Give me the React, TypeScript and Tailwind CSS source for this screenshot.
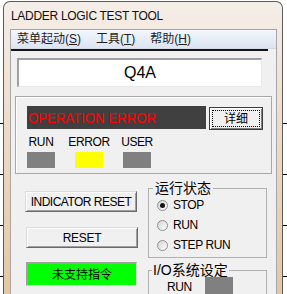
import React from 'react';

function Ticks({ right }: { right?: boolean }) {
  return (
    <div className={right ? 'flex w-[4px] shrink-0 flex-col gap-[50px] pt-[123px]' : 'flex w-[3px] shrink-0 flex-col gap-[50px] pt-[123px]'}>
      <div className="h-px bg-black" />
      <div className="h-px bg-black" />
      <div className="h-px bg-black" />
      <div className="h-px bg-black" />
    </div>
  );
}

function Radio({ label, checked }: { label: string; checked?: boolean }) {
  return (
    <div className="flex h-[20px] items-center gap-[5px] pl-[8px]">
      <div className="flex h-[11px] w-[11px] items-center justify-center rounded-full border border-[#8e8f8f] bg-gradient-to-br from-[#d4d4d4] to-white">
        {checked && <div className="h-[5px] w-[5px] rounded-full bg-[#151515]" />}
      </div>
      <span className="text-[12px] leading-none tracking-[-0.4px]">{label}</span>
    </div>
  );
}

function Indicator({ label, color }: { label: string; color: string }) {
  return (
    <div className="flex w-[28px] flex-col items-center">
      <span className="whitespace-nowrap text-[12px] leading-[14px] tracking-[-0.4px]">{label}</span>
      <div className={`mt-[3px] h-[16px] w-[28px] ${color}`} />
    </div>
  );
}

export default function App() {
  return (
    <div className="flex h-[294px] w-[287px] overflow-hidden bg-white font-['Liberation_Sans','Noto_Sans_CJK_SC',sans-serif] text-black">
      <Ticks />

      {/* Window */}
      <div className="mt-px flex w-[280px] shrink-0 flex-col rounded-t-[7px] border border-b-0 border-[#5b5b5b] bg-gradient-to-b from-[#f5eee8] via-[#ecd8c4] to-[#e5c6a4]">
        <div className="flex h-[27px] shrink-0 items-center pl-[7px] text-[12px] tracking-[-0.3px] text-[#111]">
          LADDER LOGIC TEST TOOL
        </div>

        <div className="ml-[6px] mr-[5px] shrink-0 border border-b-0 border-[#a6a6a6] bg-[#f0f0f0] pb-[20px]">
          {/* Menu */}
          <div className="flex h-[19px] items-center gap-[15px] border-b border-[#d2d9e6] bg-gradient-to-b from-[#f3f6fc] to-[#dce4f2] pl-[6px] text-[12px] leading-none text-[#1e1e1e]">
            <span>菜单起动(<span className="underline">S</span>)</span>
            <span>工具(<span className="underline">T</span>)</span>
            <span>帮助(<span className="underline">H</span>)</span>
          </div>
          <div className="h-[2px] w-[257px] bg-[#141414]" />

          {/* Device name */}
          <div className="ml-[6px] mt-[7px] flex h-[29px] w-[245px] items-center justify-center border-l-2 border-t-2 border-b border-r border-l-[#a0a0a0] border-t-[#a0a0a0] border-b-[#e8e8e8] border-r-[#e8e8e8] bg-white text-[16px] font-['Liberation_Sans',sans-serif]">
            Q4A
          </div>

          {/* Status panel */}
          <div className="ml-[4px] mt-[9px] h-[78px] w-[257px] border border-[#a8a8a8] pl-[11px] pt-[9px] shadow-[inset_1px_1px_0_#fff]">
            <div className="flex items-start gap-[3px]">
              <div className="flex h-[23px] w-[179px] items-center overflow-hidden bg-[#404040]">
                <span className="origin-left scale-x-[0.88] whitespace-nowrap pl-[1px] text-[15px] leading-none text-[#ff0000]">
                  OPERATION ERROR
                </span>
              </div>
              <button className="mt-px flex h-[23px] w-[54px] items-center justify-center border border-[#3c3c3c] bg-[#f0f0f0] p-[2px] shadow-[inset_1px_1px_0_#fff,inset_-1px_-1px_0_#808080]">
                <span className="flex h-full w-full items-center justify-center border border-dotted border-black text-[12px] leading-none">
                  详细
                </span>
              </button>
            </div>
            <div className="mt-[5px] flex gap-[20px]">
              <Indicator label="RUN" color="bg-[#808080]" />
              <Indicator label="ERROR" color="bg-[#ffff00]" />
              <Indicator label="USER" color="bg-[#808080]" />
            </div>
          </div>

          {/* Lower section */}
          <div className="mt-[7px] flex">
            <div className="ml-[14px] flex w-[113px] flex-col pt-[10px]">
              <button className="h-[21px] w-[112px] border border-[#dcdcdc] border-b-[#696969] border-r-[#696969] bg-[#f0f0f0] text-[12px] leading-none tracking-[-0.5px] shadow-[inset_1px_1px_0_#fff,inset_-1px_-1px_0_#a0a0a0]">
                INDICATOR RESET
              </button>
              <button className="ml-px mt-[15px] h-[21px] w-[112px] border border-[#dcdcdc] border-b-[#696969] border-r-[#696969] bg-[#f0f0f0] text-[12px] leading-none tracking-[-0.3px] shadow-[inset_1px_1px_0_#fff,inset_-1px_-1px_0_#a0a0a0]">
                RESET
              </button>
              <div className="ml-px mt-[14px] flex h-[24px] w-[111px] items-center justify-center border-l-2 border-t-2 border-b border-r border-l-[#a0a0a0] border-t-[#a0a0a0] border-b-[#e8e8e8] border-r-[#e8e8e8] bg-[#00ff00] text-[12px] leading-none">
                未支持指令
              </div>
            </div>

            <div className="ml-[10px] flex w-[119px] flex-col">
              <fieldset className="border border-[#b0b0b0] pb-[2px]">
                <legend className="ml-[4px] px-[2px] text-[14px] leading-[14px]">运行状态</legend>
                <Radio label="STOP" checked />
                <Radio label="RUN" />
                <Radio label="STEP RUN" />
              </fieldset>
              <fieldset className="mt-[5px] h-[40px] border border-[#b0b0b0]">
                <legend className="ml-[3px] px-[1px] text-[14px] leading-[14px]">I/O系统设定</legend>
                <div className="flex items-start pl-[18px]">
                  <span className="mt-[3px] text-[12px] leading-[14px] tracking-[-0.4px]">RUN</span>
                  <div className="ml-[13px] h-[18px] w-[28px] bg-[#808080]" />
                </div>
              </fieldset>
            </div>
          </div>
        </div>
      </div>

      <Ticks right />
    </div>
  );
}
